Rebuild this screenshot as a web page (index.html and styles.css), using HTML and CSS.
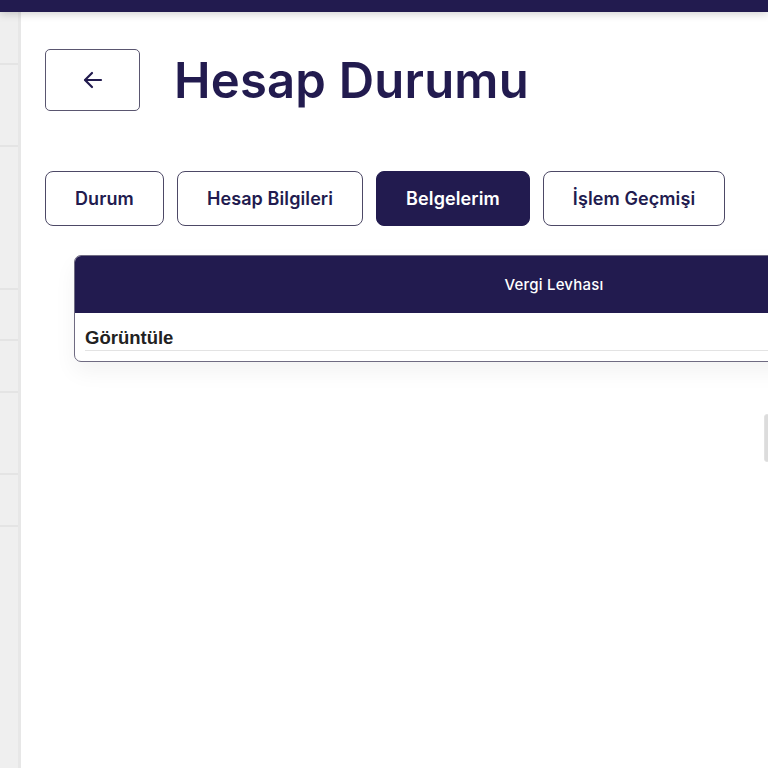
FILE: index.html
```html
<!DOCTYPE html>
<html lang="tr">
<head>
  <meta charset="UTF-8">
  <meta name="viewport" content="width=device-width, initial-scale=1.0">
  <title>Hesap Durumu</title>
  <link rel="stylesheet" href="styles.css">
</head>
<body>
  <div class="topbar"></div>
  <div class="layout">
    <!-- Yan menü -->
    <aside class="sidebar">
      <div class="side-item" style="height:53px"></div>
      <div class="side-item" style="height:82px"></div>
      <div class="side-item" style="height:143px"></div>
      <div class="side-item" style="height:51px"></div>
      <div class="side-item" style="height:52px"></div>
      <div class="side-item" style="height:82px"></div>
      <div class="side-item" style="height:52px"></div>
    </aside>

    <main class="content">
      <div class="page-header">
        <button class="back-btn" type="button" aria-label="Geri">
          <svg width="20" height="18" viewBox="0 0 20 18" fill="none" stroke="#221b4f" stroke-width="2.2" stroke-linecap="round" stroke-linejoin="round">
            <path d="M18 9H2.5"/>
            <path d="M9 2L2 9l7 7"/>
          </svg>
        </button>
        <h1>Hesap Durumu</h1>
      </div>

      <!-- Sekmeler -->
      <div class="tabs">
        <a href="#" class="tab">Durum</a>
        <a href="#" class="tab">Hesap Bilgileri</a>
        <a href="#" class="tab active">Belgelerim</a>
        <a href="#" class="tab">İşlem Geçmişi</a>
      </div>

      <div class="table-wrap">
        <table class="doc-table">
          <thead>
            <tr><th>Vergi Levhası</th></tr>
          </thead>
          <tbody>
            <tr><td><a href="#">Görüntüle</a></td></tr>
          </tbody>
        </table>
      </div>
    </main>
  </div>
  <div class="edge-box"></div>
</body>
</html>
```

FILE: styles.css
```css
html, body {
  margin: 0;
  height: 100%;
  overflow: hidden;
}
body {
  font-family: Inter, "Noto Sans", sans-serif;
  background: #fff;
  color: #221b4f;
  position: relative;
}
.topbar {
  height: 12px;
  background: #221b4f;
  box-shadow: 0 2px 8px rgba(0, 0, 0, 0.18);
  position: relative;
  z-index: 2;
}
.layout {
  display: flex;
  height: calc(100% - 12px);
}
.sidebar {
  width: 18px;
  flex-shrink: 0;
  background: #efefef;
  border-right: 3px solid #e7e7e7;
}
.side-item {
  border-bottom: 2px solid #e4e4e4;
  box-sizing: border-box;
}
.content {
  flex: 1;
  padding: 37px 0 0 24px;
  min-width: 0;
}
.page-header {
  display: flex;
  align-items: center;
  gap: 34px;
  margin-bottom: 60px;
}
.back-btn {
  width: 95px;
  height: 62px;
  border: 1px solid #5a5670;
  border-radius: 5px;
  background: #fff;
  display: flex;
  align-items: center;
  justify-content: center;
  padding: 0;
  cursor: pointer;
}
h1 {
  margin: 0;
  font-size: 49px;
  font-weight: 600;
  letter-spacing: 0.2px;
  color: #221b4f;
}
.tabs {
  display: flex;
  gap: 13px;
}
.tab {
  display: flex;
  align-items: center;
  justify-content: center;
  height: 55px;
  box-sizing: border-box;
  padding: 0 29px;
  border: 1px solid #4d4966;
  border-radius: 8px;
  font-size: 18px;
  font-weight: 600;
  letter-spacing: 0.1px;
  color: #221b4f;
  text-decoration: none;
  background: #fff;
}
.tab.active {
  background: #221b4f;
  border-color: #221b4f;
  color: #fff;
}
.table-wrap {
  margin: 29px 0 0 29px;
  width: 958px;
  border: 1px solid #6f6b82;
  border-radius: 7px;
  overflow: hidden;
  box-shadow: 0 10px 22px rgba(0, 0, 0, 0.05);
}
.doc-table {
  width: 100%;
  border-collapse: collapse;
}
.doc-table th {
  background: #221b4f;
  color: #fff;
  height: 57px;
  font-size: 15px;
  font-weight: 500;
  letter-spacing: 0.2px;
  padding: 0;
}
.doc-table td {
  padding: 0 10px 10px;
}
.doc-table td a {
  display: block;
  padding: 14px 0 1px;
  border-bottom: 1px solid #e3e3e3;
  font-family: "Liberation Sans", Arial, sans-serif;
  font-size: 18.5px;
  font-weight: 700;
  color: #222;
  text-decoration: none;
}
.edge-box {
  position: absolute;
  right: -2px;
  top: 414px;
  width: 4px;
  height: 46px;
  border: 1px solid #e2e2e2;
  border-radius: 3px;
  background: #dcdcdc;
}
```
